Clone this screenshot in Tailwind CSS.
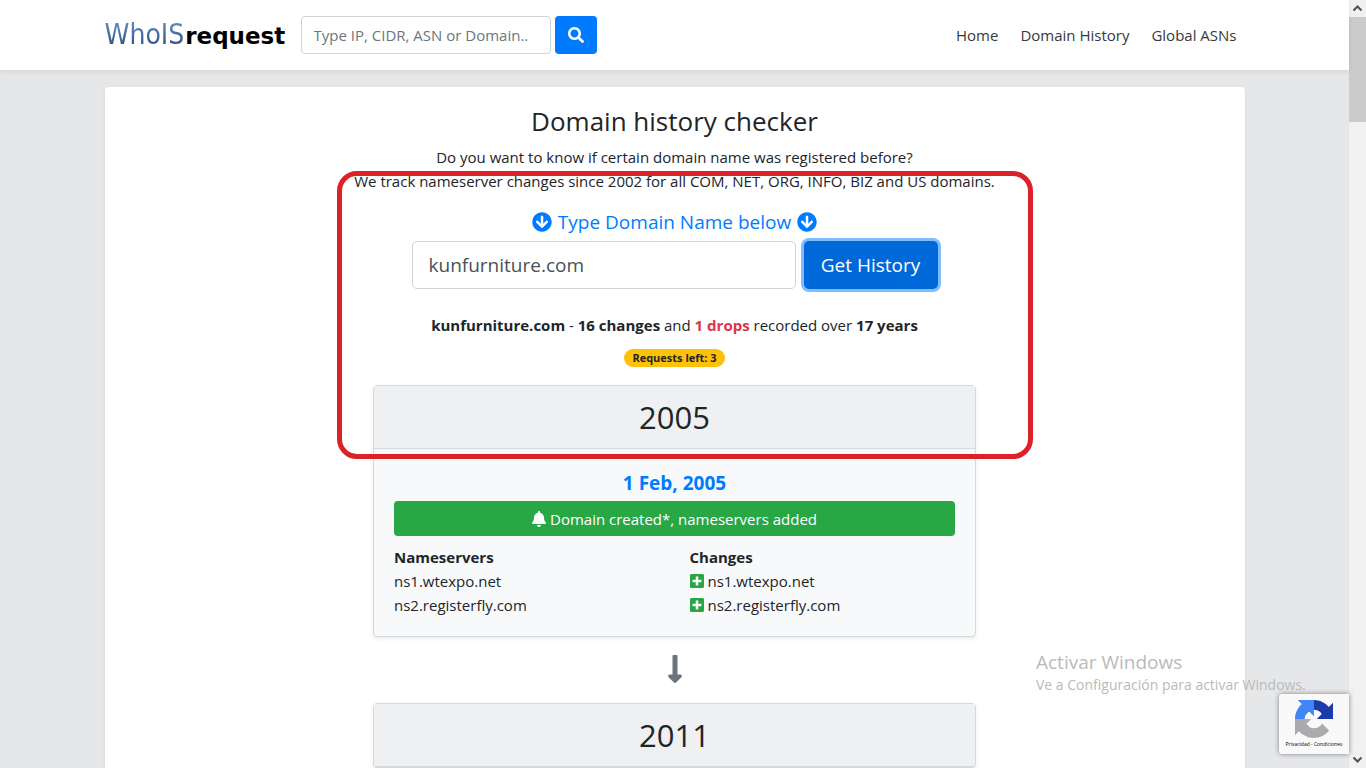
<!doctype html>
<html lang="en">
    <head>
        <meta charset="UTF-8" />
        <meta name="viewport" content="width=device-width, initial-scale=1.0" />
        <title>Domain history checker - WhoISrequest</title>
        <script src="https://cdn.jsdelivr.net/npm/@tailwindcss/browser@4"></script>
    </head>
    <body
        class="flex h-screen overflow-hidden bg-[#e6e7e9] font-['Segoe_UI','Open_Sans',sans-serif] text-[15px] leading-6 text-[#212529]"
    >
        <!-- Icons -->
        <svg class="hidden">
            <symbol id="icon-search" viewBox="0 0 512 512">
                <path
                    d="M505 442.7L405.3 343c-4.500-4.500-10.600-7-17-7H372c27.600-35.300 44-79.700 44-128C416 93.100 322.900 0 208 0S0 93.100 0 208s93.100 208 208 208c48.300 0 92.700-16.400 128-44v16.300c0 6.400 2.500 12.500 7 17l99.700 99.700c9.400 9.400 24.600 9.400 33.900 0l28.300-28.300c9.400-9.400 9.400-24.600.1-34zM208 336c-70.700 0-128-57.200-128-128 0-70.700 57.200-128 128-128 70.700 0 128 57.200 128 128 0 70.700-57.200 128-128 128z"
                />
            </symbol>
            <symbol id="icon-down" viewBox="0 0 512 512">
                <path
                    d="M504 256c0 137-111 248-248 248S8 393 8 256 119 8 256 8s248 111 248 248zm-143.600-28.900L288 302.600V120c0-13.300-10.700-24-24-24h-16c-13.300 0-24 10.700-24 24v182.600l-72.400-75.500c-9.300-9.700-24.800-9.900-34.300-.4l-10.900 11c-9.400 9.400-9.400 24.600 0 33.900L239 404.300c9.400 9.400 24.600 9.400 33.900 0l132.700-132.700c9.400-9.400 9.400-24.600 0-33.900l-10.900-11c-9.500-9.500-25-9.300-34.300.4z"
                />
            </symbol>
            <symbol id="icon-bell" viewBox="0 0 448 512">
                <path
                    d="M224 512c35.320 0 63.970-28.650 63.970-64H160.030c0 35.350 28.650 64 63.970 64zm215.390-149.710c-19.320-20.760-55.470-51.990-55.470-154.290 0-77.700-54.480-139.900-127.940-155.160V32c0-17.670-14.320-32-31.980-32s-31.980 14.330-31.980 32v20.840C118.560 68.100 64.080 130.300 64.080 208c0 102.300-36.150 133.530-55.470 154.290-6 6.450-8.660 14.160-8.610 21.710.11 16.400 12.980 32 32.100 32h383.800c19.120 0 32-15.600 32.100-32 .05-7.550-2.610-15.270-8.610-21.710z"
                />
            </symbol>
            <symbol id="icon-plus" viewBox="0 0 448 512">
                <path
                    d="M400 32H48C21.500 32 0 53.500 0 80v352c0 26.500 21.500 48 48 48h352c26.500 0 48-21.500 48-48V80c0-26.500-21.500-48-48-48zm-32 252c0 6.600-5.400 12-12 12h-92v92c0 6.600-5.400 12-12 12h-56c-6.600 0-12-5.400-12-12v-92H92c-6.600 0-12-5.400-12-12v-56c0-6.600 5.400-12 12-12h92v-92c0-6.600 5.400-12 12-12h56c6.600 0 12 5.400 12 12v92h92c6.600 0 12 5.400 12 12v56z"
                />
            </symbol>
            <symbol id="icon-long-arrow" viewBox="0 0 256 512">
                <path
                    d="M168 345.941V44c0-6.627-5.373-12-12-12h-56c-6.627 0-12 5.373-12 12v301.941H41.941c-21.382 0-32.090 25.851-16.971 40.971l86.059 86.059c9.373 9.373 24.569 9.373 33.941 0l86.059-86.059c15.119-15.119 4.411-40.971-16.971-40.971H168z"
                />
            </symbol>
        </svg>

        <div class="relative flex min-w-0 flex-1 flex-col">
            <header class="relative bg-white shadow-[0_2px_4px_rgba(0,0,0,0.075)]">
                <div class="mx-auto flex h-[70px] max-w-[1140px] items-center">
                    <a href="#" class="mr-4 flex w-[180px] items-baseline gap-px whitespace-nowrap">
                        <span
                            class="bg-linear-to-b from-[#6f9bd0] to-[#1d3f70] bg-clip-text font-['DejaVu_Sans_Condensed','Open_Sans',sans-serif] text-[28px] leading-10 text-transparent"
                            >WhoIS</span
                        >
                        <span
                            class="font-['DejaVu_Sans',sans-serif] text-[23px] font-bold text-black"
                            >request</span
                        >
                    </a>
                    <form class="flex gap-1">
                        <input
                            type="text"
                            aria-label="Search"
                            placeholder="Type IP, CIDR, ASN or Domain.."
                            class="h-[38px] w-[250px] rounded border border-[#ced4da] bg-white px-3 placeholder:text-[#6c757d]"
                        />
                        <button
                            type="button"
                            aria-label="Search"
                            class="flex h-[38px] w-[42px] items-center justify-center rounded bg-[#007bff] text-white"
                        >
                            <svg class="size-4 fill-current"><use href="#icon-search" /></svg>
                        </button>
                    </form>
                    <nav class="mr-2 ml-auto flex gap-[22px] text-[#343a40]">
                        <a href="#">Home</a>
                        <a href="#">Domain History</a>
                        <a href="#">Global ASNs</a>
                    </nav>
                </div>
            </header>

            <main
                class="relative mx-auto mt-[17px] min-h-0 w-full max-w-[1140px] flex-1 overflow-hidden rounded-t bg-white pt-[17px] text-center shadow-[0_2px_4px_rgba(0,0,0,0.075)]"
            >
                <h1 class="mb-[7px] text-[26px] leading-[34px]">Domain history checker</h1>
                <p>
                    Do you want to know if certain domain name was registered before?<br />
                    We track nameserver changes since 2002 for all COM, NET, ORG, INFO, BIZ
                    and US domains.
                </p>

                <form class="mx-auto mt-[17px] w-[526px]">
                    <label
                        for="domain"
                        class="mb-[7px] flex items-center justify-center gap-[6px] text-[19px] text-[#007bff]"
                    >
                        <svg class="size-5 fill-current"><use href="#icon-down" /></svg>
                        Type Domain Name below
                        <svg class="size-5 fill-current"><use href="#icon-down" /></svg>
                    </label>
                    <div class="flex gap-2">
                        <input
                            id="domain"
                            type="text"
                            value="kunfurniture.com"
                            class="h-12 min-w-0 flex-1 rounded-[5px] border border-[#ced4da] px-4 text-[19px] text-[#495057]"
                        />
                        <button
                            type="button"
                            class="h-12 w-[134px] rounded-[5px] bg-[#0069d9] text-[19px] text-white ring-3 ring-[#80bdff]"
                        >
                            Get History
                        </button>
                    </div>
                </form>

                <p class="mt-6">
                    <b>kunfurniture.com</b> - <b>16 changes</b> and
                    <b class="text-[#dc3545]">1 drops</b> recorded over <b>17 years</b>
                </p>
                <div class="mt-3 flex justify-center">
                    <span
                        class="rounded-full bg-[#ffc107] px-2 text-[11px] leading-[18px] font-bold"
                        >Requests left: 3</span
                    >
                </div>

                <section
                    class="mx-auto mt-[18px] w-[603px] rounded border border-[#d6d8da] bg-[#f8f9fa] shadow-[0_2px_4px_rgba(0,0,0,0.075)]"
                >
                    <h2
                        class="border-b border-[#d6d8da] bg-[#eff0f2] py-3 text-[31px] leading-[38px]"
                    >
                        2005
                    </h2>
                    <div class="p-5 pb-[19px]">
                        <h3 class="mt-[2px] mb-[6px] text-[19px] font-bold text-[#007bff]">
                            1 Feb, 2005
                        </h3>
                        <div
                            class="mb-[9px] flex h-[35px] items-center justify-center gap-1 rounded bg-[#28a745] text-white"
                        >
                            <svg class="h-4 w-[14px] fill-current"><use href="#icon-bell" /></svg>
                            Domain created*, nameservers added
                        </div>
                        <div class="grid grid-cols-2 gap-x-[30px] text-left">
                            <div>
                                <b>Nameservers</b>
                                <div>ns1.wtexpo.net</div>
                                <div>ns2.registerfly.com</div>
                            </div>
                            <div>
                                <b>Changes</b>
                                <div class="flex items-center gap-1">
                                    <svg class="h-4 w-[14px] fill-[#28a745]"><use href="#icon-plus" /></svg>
                                    ns1.wtexpo.net
                                </div>
                                <div class="flex items-center gap-1">
                                    <svg class="h-4 w-[14px] fill-[#28a745]"><use href="#icon-plus" /></svg>
                                    ns2.registerfly.com
                                </div>
                            </div>
                        </div>
                    </div>
                </section>

                <svg class="mx-auto mt-[15px] mb-[17px] h-[34px] w-4 fill-[#6c757d]">
                    <use href="#icon-long-arrow" />
                </svg>

                <section
                    class="mx-auto w-[603px] rounded border border-[#d6d8da] bg-[#f8f9fa] shadow-[0_2px_4px_rgba(0,0,0,0.075)]"
                >
                    <h2
                        class="border-b border-[#d6d8da] bg-[#eff0f2] py-3 text-[31px] leading-[38px]"
                    >
                        2011
                    </h2>
                </section>

                <!-- Highlight around the form and the summary -->
                <div
                    class="pointer-events-none absolute top-[84px] left-[calc(50%-338px)] h-[288px] w-[696px] rounded-[20px] border-5 border-[#dc2229]"
                ></div>
            </main>

            <div
                class="pointer-events-none absolute right-[38px] bottom-[72px] w-[275px] whitespace-nowrap text-[#b9babb]"
            >
                <div class="text-[19px]">Activar Windows</div>
                <div class="text-[14px] leading-[22px]">
                    Ve a Configuración para activar Windows.
                </div>
            </div>

            <!-- reCAPTCHA badge -->
            <div
                class="absolute right-0 bottom-[14px] flex h-[60px] w-[70px] flex-col items-center rounded-l-[3px] bg-[#f9f9f9] pt-[6px] shadow-[0_0_5px_gray]"
            >
                <svg viewBox="0 0 64 64" class="size-[38px]">
                    <path
                        fill="#1c3aa9"
                        d="M64 31.955a33.300 33.300 0 0 0-.033-1.370V4.687l-7.160 7.160C50.948 4.674 42.033.093 32.050.093c-10.389 0-19.622 4.960-25.456 12.640l11.736 11.860a15.550 15.550 0 0 1 4.754-5.334c2.050-1.600 4.952-2.906 8.968-2.906.485 0 .860.057 1.135.163 4.976.393 9.288 3.140 11.828 7.124l-8.307 8.307L64 31.953"
                    />
                    <path
                        fill="#4285f4"
                        d="M31.862.094a33 33 0 0 0-1.370.033H4.594l7.160 7.160C4.582 13.147 0 22.062 0 32.046c0 10.388 4.960 19.622 12.640 25.456l11.860-11.736a15.550 15.550 0 0 1-5.334-4.754c-1.600-2.050-2.906-4.952-2.906-8.968 0-.485.057-.860.163-1.135.393-4.976 3.140-9.288 7.124-11.828l8.307 8.307L31.860.095"
                    />
                    <path
                        fill="#ababab"
                        d="M.001 32.045a33 33 0 0 0 .033 1.370v25.898l7.160-7.160c5.860 7.173 14.774 11.754 24.758 11.754 10.388 0 19.622-4.960 25.456-12.640l-11.736-11.860a15.550 15.550 0 0 1-4.754 5.334c-2.050 1.600-4.952 2.906-8.968 2.906-.485 0-.860-.057-1.135-.163-4.976-.393-9.288-3.140-11.828-7.124l8.307-8.307c-10.522.040-22.400.066-27.293-.008"
                    />
                </svg>
                <div class="text-[5px] leading-3 whitespace-nowrap text-black">
                    <a href="#">Privacidad</a> - <a href="#">Condiciones</a>
                </div>
            </div>
        </div>

        <!-- Scrollbar -->
        <div class="flex w-[17px] flex-col items-center bg-[#f1f1f1]">
            <svg viewBox="0 0 17 17" class="size-[17px] fill-none stroke-[#505050] stroke-2">
                <path d="M4.500 10.500l4-4 4 4" />
            </svg>
            <div class="h-[105px] w-full bg-[#cbcbcb]"></div>
            <svg viewBox="0 0 17 17" class="mt-auto size-[17px] fill-none stroke-[#505050] stroke-2">
                <path d="M4.500 6.500l4 4 4-4" />
            </svg>
        </div>
    </body>
</html>
